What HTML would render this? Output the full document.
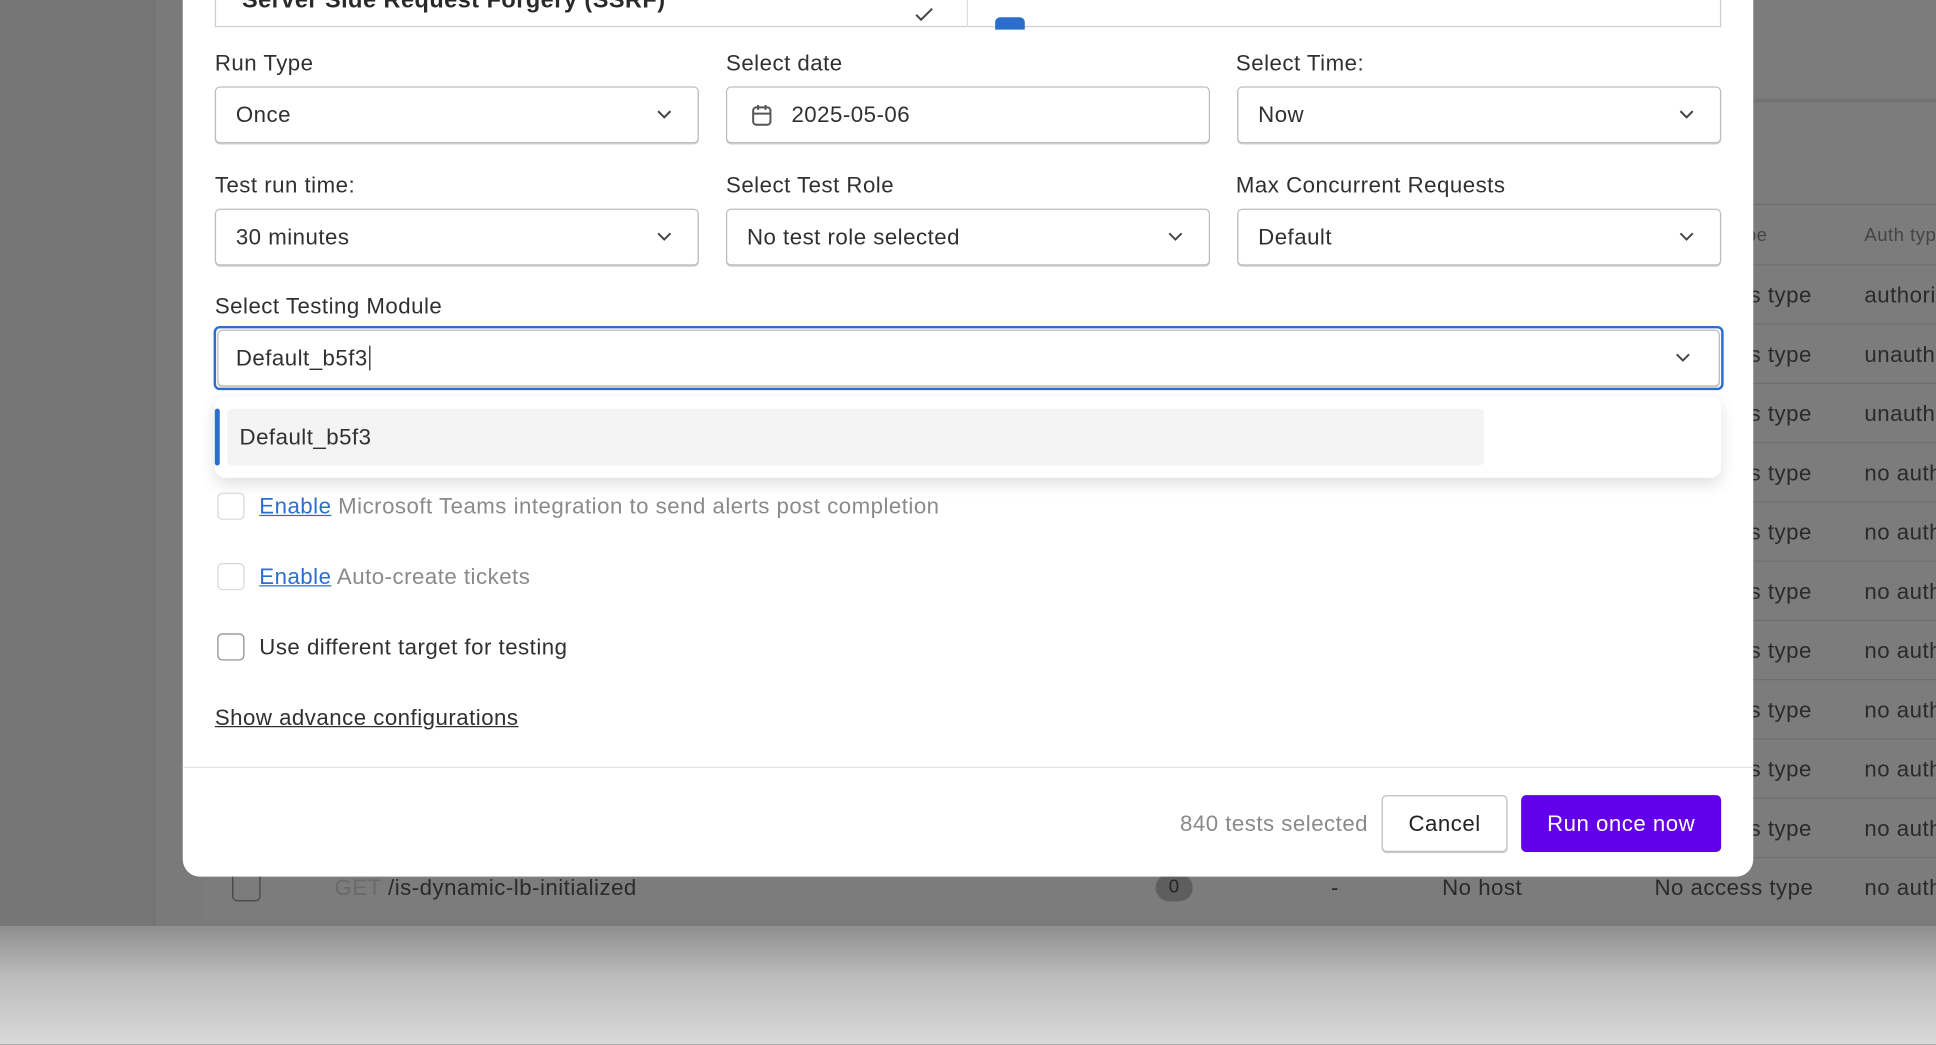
<!DOCTYPE html>
<html><head><meta charset="utf-8"><style>
*{box-sizing:border-box;margin:0;padding:0}
html,body{width:1936px;height:1044px;overflow:hidden;background:#7a7a7a}
#w{position:absolute;left:0;top:0;width:1568px;height:846px;transform:scale(1.234694);transform-origin:0 0;font-family:"Liberation Sans",sans-serif;color:#303030;font-size:18px;letter-spacing:0.4px}
.a{position:absolute}
.t{position:absolute;color:#2a2a2a;font-size:18px;line-height:20px;white-space:nowrap}
.hl{position:absolute;left:1420px;width:148px;height:1px;background:#6e6e6e}
.inp{position:absolute;height:46px;border:1px solid #bdbdbd;border-radius:4px;background:#fff;box-shadow:0 1px 0 #d0d0d0}
.inp span{position:absolute;left:16px;top:12px;line-height:20px;white-space:nowrap}
.chev{position:absolute;right:20px;top:17px;width:14px;height:9px}
.lab{position:absolute;line-height:20px;white-space:nowrap}
.cb{position:absolute;left:176px;width:22px;height:22px;border:1.5px solid #8a8a8a;border-radius:4px;background:#fff}
.cb.l{border-color:#d8d8d8}
</style></head><body><div id="w">
<div class="a" style="left:0;top:0;width:124px;height:750px;background:#767676"></div>
<div class="a" style="left:124px;top:0;width:2px;height:750px;background:#717171"></div>
<div class="a" style="left:165px;top:0;width:1403px;height:745px;background:#7c7c7c"></div>
<div class="a" style="left:1420px;top:80px;width:148px;height:3px;background:#727272"></div>
<div class="a" style="left:0;top:750px;width:1568px;height:96px;background:linear-gradient(#8f8f8f,#bdbdbd 45%,#d9d9d9)"></div>
<div class="hl" style="top:165px"></div><div class="hl" style="top:214px"></div><div class="hl" style="top:262px"></div><div class="hl" style="top:310px"></div><div class="hl" style="top:358px"></div><div class="hl" style="top:406px"></div><div class="hl" style="top:454px"></div><div class="hl" style="top:502px"></div><div class="hl" style="top:550px"></div><div class="hl" style="top:598px"></div><div class="hl" style="top:646px"></div><div class="hl" style="top:694px"></div>
<div class="t" style="left:1414px;top:181px;font-size:15px;color:#444">pe</div><div class="t" style="left:1510px;top:181px;font-size:15px;color:#444">Auth typ</div>
<div class="t" style="left:1417px;top:229px">s type</div><div class="t" style="left:1510px;top:229px">authori</div>
<div class="t" style="left:1417px;top:277px">s type</div><div class="t" style="left:1510px;top:277px">unauth</div>
<div class="t" style="left:1417px;top:325px">s type</div><div class="t" style="left:1510px;top:325px">unauth</div>
<div class="t" style="left:1417px;top:373px">s type</div><div class="t" style="left:1510px;top:373px">no auth</div>
<div class="t" style="left:1417px;top:421px">s type</div><div class="t" style="left:1510px;top:421px">no auth</div>
<div class="t" style="left:1417px;top:469px">s type</div><div class="t" style="left:1510px;top:469px">no auth</div>
<div class="t" style="left:1417px;top:517px">s type</div><div class="t" style="left:1510px;top:517px">no auth</div>
<div class="t" style="left:1417px;top:565px">s type</div><div class="t" style="left:1510px;top:565px">no auth</div>
<div class="t" style="left:1417px;top:613px">s type</div><div class="t" style="left:1510px;top:613px">no auth</div>
<div class="t" style="left:1417px;top:661px">s type</div><div class="t" style="left:1510px;top:661px">no auth</div>
<div class="a" style="left:188px;top:707px;width:23px;height:23px;border:1.5px solid #444;border-radius:4px"></div>
<div class="t" style="left:271px;top:709px"><span style="color:#6a6a6a">GET</span> /is-dynamic-lb-initialized</div>
<div class="a" style="left:936px;top:708px;width:30px;height:22px;border-radius:11px;background:#5e5e5e;color:#222;font-size:15px;text-align:center;line-height:22px">0</div>
<div class="t" style="left:1078px;top:709px">-</div><div class="t" style="left:1168px;top:709px">No host</div><div class="t" style="left:1340px;top:709px">No access type</div><div class="t" style="left:1510px;top:709px">no auth</div>

<div class="a" style="left:148px;top:-20px;width:1272px;height:730px;background:#fff;border-radius:0 0 14px 14px"></div>
<div class="a" style="left:174px;top:-20px;width:1220px;height:42px;border:1px solid #cfcfcf;border-top:none"></div>
<div class="a" style="left:783px;top:0;width:1px;height:22px;background:#ddd"></div>
<div class="t" style="left:196px;top:-9px;font-weight:bold;font-size:19px">Server Side Request Forgery (SSRF)</div>
<svg class="a" style="left:741px;top:6px" width="16" height="12"><path d="M1 6l4 4 9-9" stroke="#444" stroke-width="1.6" fill="none"/></svg>
<div class="a" style="left:806px;top:14px;width:24px;height:10px;background:#2c6ecb;border-radius:4px 4px 0 0"></div>

<div class="lab" style="left:174px;top:41px">Run Type</div>
<div class="lab" style="left:588px;top:41px">Select date</div>
<div class="lab" style="left:1001px;top:41px">Select Time:</div>
<div class="inp" style="left:174px;top:70px;width:392px"><span>Once</span><svg class="chev" viewBox="0 0 14 9"><path d="M2 2l5 5 5-5" stroke="#444" stroke-width="1.6" fill="none"/></svg></div>
<div class="inp" style="left:588px;top:70px;width:392px"><svg class="a" style="left:19px;top:13px" width="18" height="19" viewBox="0 0 18 19"><rect x="2" y="3" width="14" height="14" rx="2.5" stroke="#555" stroke-width="1.6" fill="none"/><path d="M2 8h14M6 1v4M12 1v4" stroke="#555" stroke-width="1.6"/></svg><span style="left:52px">2025-05-06</span></div>
<div class="inp" style="left:1002px;top:70px;width:392px"><span>Now</span><svg class="chev" viewBox="0 0 14 9"><path d="M2 2l5 5 5-5" stroke="#444" stroke-width="1.6" fill="none"/></svg></div>

<div class="lab" style="left:174px;top:140px">Test run time:</div>
<div class="lab" style="left:588px;top:140px">Select Test Role</div>
<div class="lab" style="left:1001px;top:140px">Max Concurrent Requests</div>
<div class="inp" style="left:174px;top:169px;width:392px"><span>30 minutes</span><svg class="chev" viewBox="0 0 14 9"><path d="M2 2l5 5 5-5" stroke="#444" stroke-width="1.6" fill="none"/></svg></div>
<div class="inp" style="left:588px;top:169px;width:392px"><span>No test role selected</span><svg class="chev" viewBox="0 0 14 9"><path d="M2 2l5 5 5-5" stroke="#444" stroke-width="1.6" fill="none"/></svg></div>
<div class="inp" style="left:1002px;top:169px;width:392px"><span>Default</span><svg class="chev" viewBox="0 0 14 9"><path d="M2 2l5 5 5-5" stroke="#444" stroke-width="1.6" fill="none"/></svg></div>

<div class="lab" style="left:174px;top:238px">Select Testing Module</div>
<div class="a" style="left:173px;top:264px;width:1223px;height:52px;border:2px solid #2c6ecb;border-radius:5px"></div>
<div class="inp" style="left:176px;top:267px;width:1217px;height:46px;border-color:#bdbdbd"><span style="left:14px">Default_b5f3<span style="position:static;border-left:1.5px solid #222;margin-left:1px"></span></span><svg class="chev" viewBox="0 0 14 9" style="right:22px"><path d="M2 2l5 5 5-5" stroke="#444" stroke-width="1.6" fill="none"/></svg></div>

<div class="a" style="left:174px;top:321px;width:1220px;height:66px;background:#fff;border-radius:8px;box-shadow:0 5px 12px rgba(0,0,0,.12)"></div>
<div class="a" style="left:184px;top:331px;width:1018px;height:46px;background:#f4f4f4;border-radius:4px"></div>
<div class="a" style="left:174px;top:331px;width:4px;height:46px;background:#2c6ecb;border-radius:2px"></div>
<div class="lab" style="left:194px;top:344px">Default_b5f3</div>

<div class="cb l" style="top:399px"></div>
<div class="lab" style="left:210px;top:400px;color:#8a8a8a"><u style="color:#2c6ecb">Enable</u> Microsoft Teams integration to send alerts post completion</div>
<div class="cb l" style="top:456px"></div>
<div class="lab" style="left:210px;top:457px;color:#8a8a8a"><u style="color:#2c6ecb">Enable</u> Auto-create tickets</div>
<div class="cb" style="top:513px"></div>
<div class="lab" style="left:210px;top:514px">Use different target for testing</div>
<div class="lab" style="left:174px;top:571px;text-decoration:underline">Show advance configurations</div>

<div class="a" style="left:148px;top:621px;width:1272px;height:1px;background:#e3e3e3"></div>
<div class="lab" style="left:880px;width:228px;text-align:right;top:657px;color:#8a8a8a">840 tests selected</div>
<div class="a" style="left:1119px;top:644px;width:102px;height:46px;border:1px solid #bdbdbd;border-radius:4px;box-shadow:0 1px 0 #ccc;text-align:center;line-height:44px;color:#222">Cancel</div>
<div class="a" style="left:1232px;top:644px;width:162px;height:46px;background:#6200ea;border-radius:4px;text-align:center;line-height:46px;color:#fff">Run once now</div>
</div></body></html>
